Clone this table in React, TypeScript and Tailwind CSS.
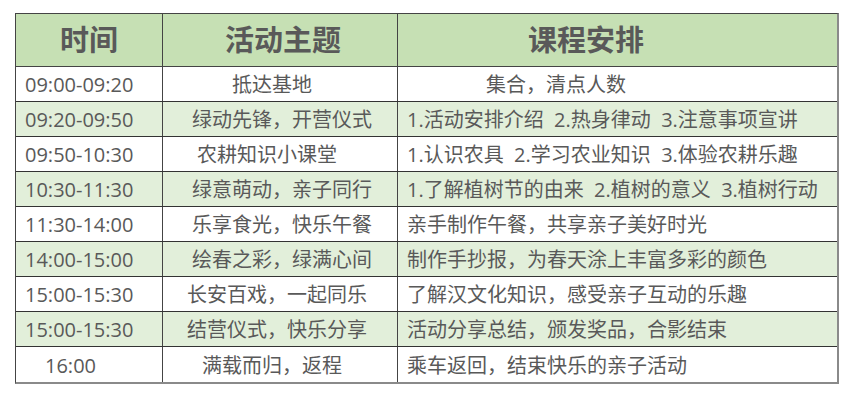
import React from "react";

type Row = {
  time: string;
  timePl: string;
  theme: string;
  themePl: string;
  plan: string;
  planPl: string;
  green: boolean;
};

const rows: Row[] = [
  { time: "09:00-09:20", timePl: "pl-[9px]", theme: "抵达基地", themePl: "pl-[69px]", plan: "集合，清点人数", planPl: "pl-[88px]", green: false },
  { time: "09:20-09:50", timePl: "pl-[9px]", theme: "绿动先锋，开营仪式", themePl: "pl-[29px]", plan: "1.活动安排介绍  2.热身律动  3.注意事项宣讲", planPl: "pl-[9px]", green: true },
  { time: "09:50-10:30", timePl: "pl-[9px]", theme: "农耕知识小课堂", themePl: "pl-[34px]", plan: "1.认识农具  2.学习农业知识  3.体验农耕乐趣", planPl: "pl-[9px]", green: false },
  { time: "10:30-11:30", timePl: "pl-[9px]", theme: "绿意萌动，亲子同行", themePl: "pl-[29px]", plan: "1.了解植树节的由来  2.植树的意义  3.植树行动", planPl: "pl-[9px]", green: true },
  { time: "11:30-14:00", timePl: "pl-[9px]", theme: "乐享食光，快乐午餐", themePl: "pl-[29px]", plan: "亲手制作午餐，共享亲子美好时光", planPl: "pl-[9px]", green: false },
  { time: "14:00-15:00", timePl: "pl-[9px]", theme: "绘春之彩，绿满心间", themePl: "pl-[29px]", plan: "制作手抄报，为春天涂上丰富多彩的颜色", planPl: "pl-[9px]", green: true },
  { time: "15:00-15:30", timePl: "pl-[9px]", theme: "长安百戏，一起同乐", themePl: "pl-[24px]", plan: "了解汉文化知识，感受亲子互动的乐趣", planPl: "pl-[9px]", green: false },
  { time: "15:00-15:30", timePl: "pl-[9px]", theme: "结营仪式，快乐分享", themePl: "pl-[24px]", plan: "活动分享总结，颁发奖品，合影结束", planPl: "pl-[9px]", green: true },
  { time: "16:00", timePl: "pl-[29px]", theme: "满载而归，返程", themePl: "pl-[39px]", plan: "乘车返回，结束快乐的亲子活动", planPl: "pl-[9px]", green: false },
];

export default function App() {
  return (
    <div
      className="w-[850px] h-[400px] bg-white pt-[13px] pl-[15px] text-[#595959]"
      style={{ fontFamily: '"Open Sans", "Noto Sans CJK SC", sans-serif' }}
    >
      <div className="w-[824px] border-l border-t border-[#444444] border-r-2 border-b-2 border-r-[#8a8a8a] border-b-[#8a8a8a]">
        <div className="grid grid-cols-[147px_235px_1fr] h-[53px] bg-[#c6e0b4] border-b border-[#444444] text-[29px] font-bold">
          <div className="flex items-center pl-[44px] border-r border-[#444444]">时间</div>
          <div className="flex items-center pl-[62px] border-r border-[#444444]">活动主题</div>
          <div className="flex items-center pl-[130px]">课程安排</div>
        </div>
        {rows.map((r, i) => (
          <div
            key={i}
            className={
              "grid grid-cols-[147px_235px_1fr] h-[35px] text-[20px] whitespace-pre " +
              (r.green ? "bg-[#e2efda] " : "bg-white ") +
              (i === rows.length - 1 ? "" : "border-b border-[#333333]")
            }
          >
            <div className={"flex items-center pt-[2px] border-r border-[#444444] " + r.timePl}>{r.time}</div>
            <div className={"flex items-center pt-[2px] border-r border-[#444444] " + r.themePl}>{r.theme}</div>
            <div className={"flex items-center pt-[2px] " + r.planPl}>{r.plan}</div>
          </div>
        ))}
      </div>
    </div>
  );
}
